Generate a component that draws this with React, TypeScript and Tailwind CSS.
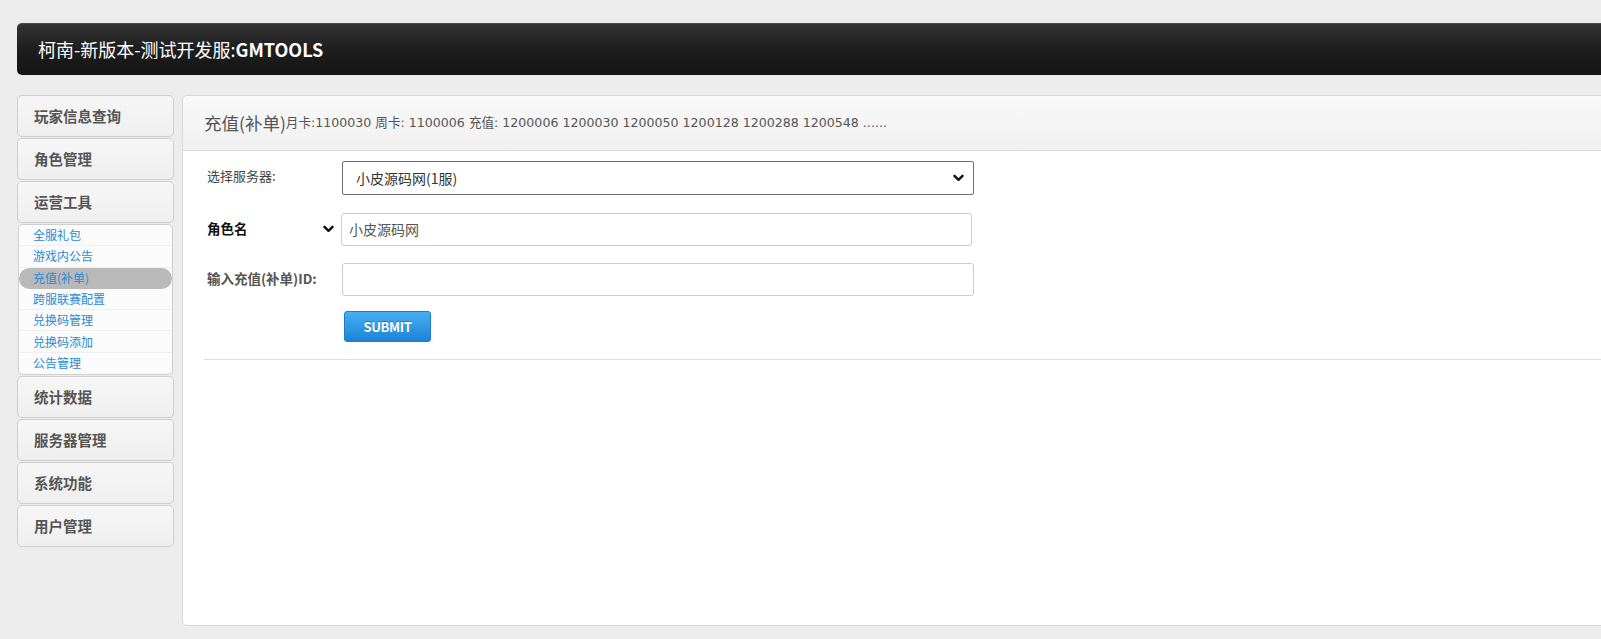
import React from "react";

const CJK = { fontFamily: '"Noto Sans CJK SC", "Noto Sans", sans-serif' };

function Chevron({ className }: { className?: string }) {
  return (
    <svg className={className} width="11" height="8" viewBox="0 0 11 8" fill="none">
      <path d="M1.5 1.8 L5.5 5.8 L9.5 1.8" stroke="#111" strokeWidth="2.4" strokeLinecap="round" strokeLinejoin="round" />
    </svg>
  );
}

const mainItemsTop = ["玩家信息查询", "角色管理", "运营工具"];
const mainItemsBottom = ["统计数据", "服务器管理", "系统功能", "用户管理"];
const subItems = ["全服礼包", "游戏内公告", "充值(补单)", "跨服联赛配置", "兑换码管理", "兑换码添加", "公告管理"];

function SideItem({ label }: { label: string }) {
  return (
    <div className="h-[42px] flex items-center pl-[16px] rounded-[5px] border border-[#cfcfcf] bg-linear-to-b from-[#f6f6f6] to-[#efefef] text-[14.5px] font-bold text-[#555]">
      {label}
    </div>
  );
}

export default function App() {
  return (
    <div className="w-[1601px] h-[639px] overflow-hidden bg-[#ececec]" style={CJK}>
      <div className="pt-[23px] pl-[17px]">
        <div className="w-[1620px] h-[52px] rounded-[5px] bg-linear-to-b from-[#333333] via-[#1e1e1e] to-[#141414] border-t border-[#4a4a4a] flex items-center pl-[21px] text-white text-[18px]">
          <span>柯南-新版本-测试开发服:</span>
          <span className="font-bold">GMTOOLS</span>
        </div>
      </div>

      <div className="flex gap-[8px] pl-[17px] pt-[20px]">
        <div className="w-[157px] shrink-0 flex flex-col gap-[1px]">
          {mainItemsTop.map((m) => (
            <SideItem key={m} label={m} />
          ))}
          <div className="h-[151px] rounded-[5px] border border-[#cfcfcf] bg-[#fbfbfb] flex flex-col mx-[1px]">
            {subItems.map((s, i) => (
              <div
                key={s}
                className={
                  "h-[21.3px] flex items-center pl-[14px] text-[12px] text-[#2a8ad4] " +
                  (s === "充值(补单)"
                    ? "bg-[#b9b9b9] rounded-full"
                    : i < subItems.length - 1
                    ? "border-b border-[#efefef]"
                    : "")
                }
              >
                {s}
              </div>
            ))}
          </div>
          {mainItemsBottom.map((m) => (
            <SideItem key={m} label={m} />
          ))}
        </div>

        <div className="w-[1500px] shrink-0 h-[531px] rounded-[5px] border border-[#d8d8d8] bg-white">
          <div className="h-[55px] flex items-center pl-[21px] border-b border-[#dcdcdc] bg-linear-to-b from-[#f9f9f9] to-[#f0f0f0] rounded-t-[5px]">
            <span className="text-[17.5px] text-[#555]">充值(补单)</span>
            <span className="text-[12.6px] text-[#555]" style={{ fontFamily: '"DejaVu Sans", "Noto Sans CJK SC", sans-serif' }}>
              月卡:1100030 周卡: 1100006 充值: 1200006 1200030 1200050 1200128 1200288 1200548 ......
            </span>
          </div>

          <div className="pl-[21px] pt-[10px]">
            <div className="flex items-center">
              <div className="w-[138px] pl-[3px] pb-[5px] text-[13px] text-[#444]">选择服务器:</div>
              <div className="w-[632px] h-[34px] border border-[#6f6f6f] rounded-[2px] flex items-center justify-between pl-[13px] pr-[9px] text-[14px] text-[#333]">
                <span>小皮源码网(1服)</span>
                <Chevron />
              </div>
            </div>

            <div className="flex items-center mt-[18px]">
              <div className="w-[137px] pl-[3px] pr-[7px] pb-[2px] flex items-center justify-between">
                <span className="text-[13.5px] font-bold text-[#111]">角色名</span>
                <Chevron />
              </div>
              <div className="w-[631px] h-[33px] border border-[#cccccc] rounded-[3px] flex items-center pl-[7px] text-[14px] text-[#555]">
                小皮源码网
              </div>
            </div>

            <div className="flex items-center mt-[17px]">
              <div className="w-[138px] pl-[3px] pb-[3px] text-[13.5px] font-semibold text-[#555]">输入充值(补单)ID:</div>
              <div className="w-[632px] h-[33px] border border-[#cccccc] rounded-[3px]" />
            </div>

            <div className="pl-[140px] mt-[15px]">
              <div className="w-[87px] h-[31px] rounded-[3px] border border-[#1f7cc8] bg-linear-to-b from-[#46aef2] to-[#1b83d8] flex items-center justify-center text-white text-[13px] font-bold tracking-tight [text-shadow:0_-1px_0_rgba(0,0,0,0.3)]">
                SUBMIT
              </div>
            </div>

            <div className="mt-[17px] border-t border-[#dddddd]" />
          </div>
        </div>
      </div>
    </div>
  );
}
